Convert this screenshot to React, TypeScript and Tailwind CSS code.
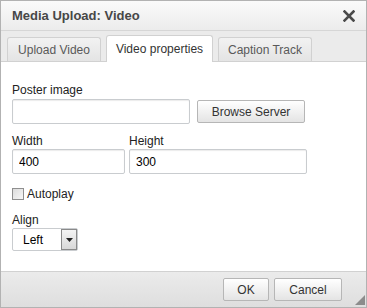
import React from 'react';

const tabs = [
  { id: 'upload', label: 'Upload Video', w: 'w-[94px]' },
  { id: 'props', label: 'Video properties', w: 'w-[107px]' },
  { id: 'caption', label: 'Caption Track', w: 'w-[94px]' },
];

const inputCls =
  'h-[25px] border border-[#c9cccf] rounded-[2px] bg-white shadow-[inset_0_1px_1px_rgba(0,0,0,0.08)] px-[6px] text-[12px] text-black outline-none';

const btnCls =
  'h-[23px] border border-[#b6b6b6] rounded-[2px] bg-linear-to-b from-[#ffffff] to-[#e4e4e4] text-[12px] text-[#333] flex items-center justify-center';

export default function App() {
  const active = 'props';

  return (
    <div className="w-[367px] h-[308px] border border-[#b2b2b2] bg-white flex flex-col relative font-['Liberation_Sans',Arial,sans-serif] text-[12px] text-[#222]">
      {/* title bar */}
      <div className="h-[30px] shrink-0 flex items-center justify-between pl-[11px] pr-[11px] bg-linear-to-b from-[#fafafa] to-[#ececec] border-b border-[#d6d6d6]">
        <span className="text-[13px] font-bold text-[#474747]">Media Upload: Video</span>
        <svg width="12" height="12" viewBox="0 0 12 12" className="mt-[1px]">
          <path d="M1.5 1.5 L10.5 10.5 M10.5 1.5 L1.5 10.5" stroke="#4a4a4a" strokeWidth="2.6" strokeLinecap="square" />
        </svg>
      </div>

      {/* tabs */}
      <div className="h-[31px] shrink-0 flex items-end gap-[5px] pl-[6px] bg-[#ebebeb] border-b border-[#d1d1d1]">
        {tabs.map(tab =>
          tab.id === active ? (
            <div
              key={tab.id}
              className={`${tab.w} h-[27px] -mb-[1px] flex items-center justify-center bg-white border border-b-0 border-[#d1d1d1] rounded-t-[3px] text-[12px] text-[#333]`}
            >
              {tab.label}
            </div>
          ) : (
            <div
              key={tab.id}
              className={`${tab.w} h-[24px] flex items-center justify-center bg-linear-to-b from-[#f2f2f2] to-[#e4e4e4] border border-b-0 border-[#d1d1d1] rounded-t-[3px] text-[12px] text-[#595959]`}
            >
              {tab.label}
            </div>
          )
        )}
      </div>

      {/* body */}
      <div className="flex-1 px-[11px] pt-[21px] flex flex-col">
        <label className="leading-[14px] text-[#222]">Poster image</label>
        <div className="flex items-center gap-[7px] mt-[2px]">
          <input className={`${inputCls} w-[178px]`} />
          <button className={`${btnCls} w-[108px]`}>Browse Server</button>
        </div>

        <div className="flex gap-[4px] mt-[10px]">
          <div className="flex flex-col">
            <label className="leading-[14px]">Width</label>
            <input className={`${inputCls} w-[113px] mt-[1px]`} defaultValue="400" />
          </div>
          <div className="flex flex-col">
            <label className="leading-[14px]">Height</label>
            <input className={`${inputCls} w-[178px] mt-[1px]`} defaultValue="300" />
          </div>
        </div>

        <div className="flex items-center gap-[3px] mt-[13px]">
          <span className="w-[12px] h-[12px] border border-[#8f8f8f] bg-linear-to-br from-[#dcdcdc] to-[#f7f7f7]" />
          <span className="leading-[14px]">Autoplay</span>
        </div>

        <label className="leading-[14px] mt-[12px]">Align</label>
        <div className="mt-[1px] w-[66px] h-[23px] border border-[#c9cccf] rounded-[2px] bg-white flex items-stretch">
          <span className="flex-1 flex items-center pl-[10px] text-[12px] text-black">Left</span>
          <span className="w-[16px] border border-[#8a8a8a] bg-linear-to-b from-[#f4f4f4] to-[#d8d8d8] flex items-center justify-center">
            <svg width="7" height="4" viewBox="0 0 7 4">
              <path d="M0 0 L7 0 L3.5 4 Z" fill="#222" />
            </svg>
          </span>
        </div>
      </div>

      {/* footer */}
      <div className="h-[36px] shrink-0 border-t border-[#d1d1d1] bg-linear-to-b from-[#ebebeb] to-[#dedede] flex items-center justify-end gap-[5px] pr-[24px]">
        <button className={`${btnCls} w-[46px] text-[#222]`}>OK</button>
        <button className={`${btnCls} w-[68px] text-[#222]`}>Cancel</button>
      </div>

      <svg width="10" height="10" viewBox="0 0 10 10" className="absolute right-[1px] bottom-[2px]">
        <path d="M10 0 L10 10 L0 10 Z" fill="#8c8c8c" />
      </svg>
    </div>
  );
}
